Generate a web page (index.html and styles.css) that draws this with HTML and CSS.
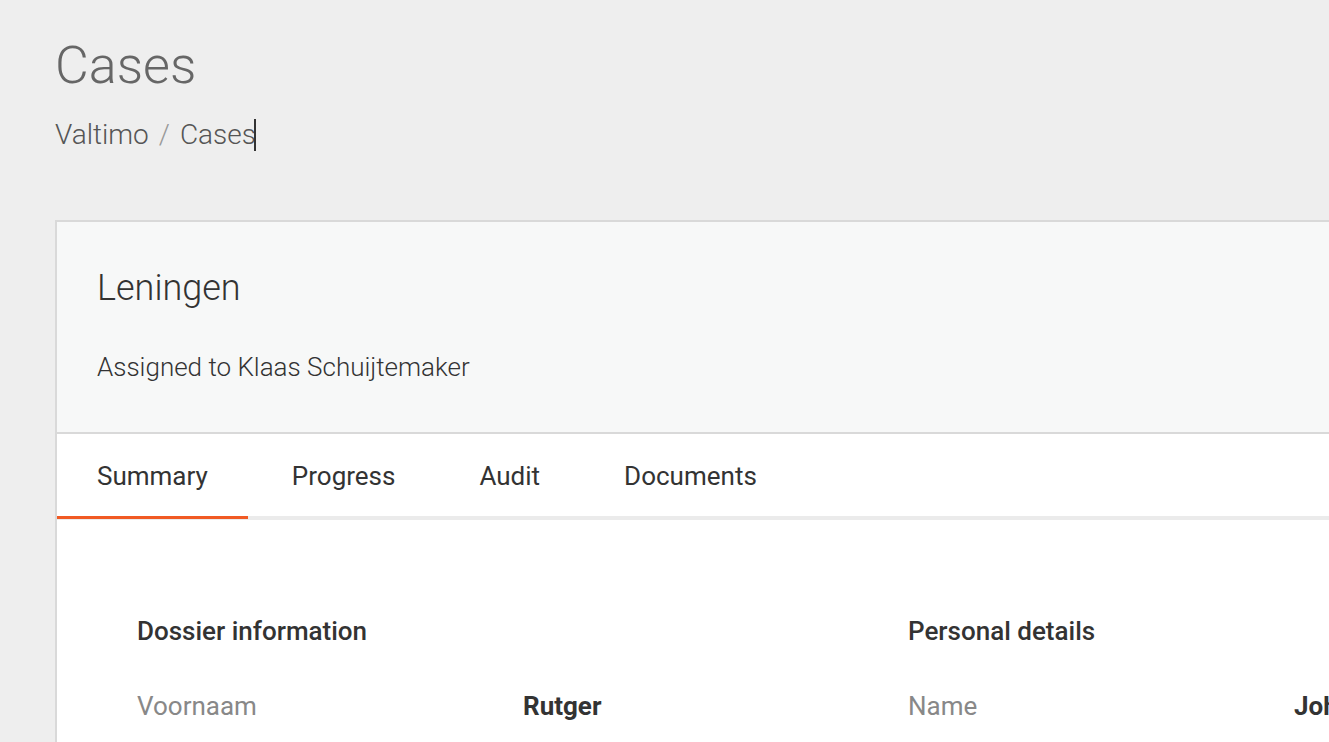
FILE: index.html
```html
<!DOCTYPE html>
<html>
<head>
<meta charset="utf-8">
<link rel="stylesheet" href="styles.css">
</head>
<body>
<div class="page">
  <div class="page-head">
    <h1 class="page-title">Cases</h1>
    <div class="crumbs"><span>Valtimo</span><span class="sep">/</span><span>Cases</span><span class="caret"></span></div>
  </div>
  <div class="card">
    <div class="card-head">
      <div class="case-title">Leningen</div>
      <div class="assignee">Assigned to Klaas Schuijtemaker</div>
    </div>
    <div class="tabs">
      <div class="tab active">Summary</div>
      <div class="tab">Progress</div>
      <div class="tab">Audit</div>
      <div class="tab">Documents</div>
    </div>
    <div class="card-body">
      <div class="section">
        <div class="section-title">Dossier information</div>
        <div class="row"><div class="label">Voornaam</div><div class="value">Rutger</div></div>
      </div>
      <div class="section">
        <div class="section-title">Personal details</div>
        <div class="row"><div class="label">Name</div><div class="value">John Doe</div></div>
      </div>
    </div>
  </div>
</div>
</body>
</html>
```

FILE: styles.css
```css
html, body {
  margin: 0;
  padding: 0;
  background: #eeeeee;
  font-family: Roboto, "Liberation Sans", sans-serif;
  overflow: hidden;
}
.page {
  padding: 28px 0 0 55px;
  width: 1600px;
}
.page-head {
  height: 192px;
}
.page-title {
  margin: 0;
  font-weight: 300;
  font-size: 52px;
  line-height: 76px;
  color: #666;
}
.crumbs {
  display: flex;
  align-items: center;
  font-weight: 300;
  font-size: 28px;
  line-height: 36px;
  color: #555;
  margin-top: 13px;
}
.crumbs .sep {
  color: #999;
  margin: 0 10px;
}
.caret {
  display: inline-block;
  width: 2px;
  height: 32px;
  background: #333;
  margin-left: -2px;
}
.card {
  border: 2px solid #d9d9d9;
  border-right: none;
  background: #fff;
}
.card-head {
  background: #f7f8f8;
  border-bottom: 2px solid #d9d9d9;
  padding: 45px 40px 0 40px;
  height: 165px;
}
.case-title {
  font-weight: 300;
  font-size: 36px;
  line-height: 42px;
  color: #333;
}
.assignee {
  margin-top: 41px;
  font-weight: 300;
  font-size: 26px;
  line-height: 34px;
  color: #333;
}
.tabs {
  display: flex;
  height: 82px;
  border-bottom: 4px solid #ebebeb;
}
.tab {
  padding: 0 40px;
  margin-right: 4px;
  font-size: 26px;
  line-height: 84px;
  color: #333;
  position: relative;
}
.tab.active::after {
  content: "";
  position: absolute;
  left: 0;
  right: 0;
  bottom: -3px;
  height: 3px;
  background: #f15a24;
}
.card-body {
  display: grid;
  grid-template-columns: 771px 771px;
  padding: 95px 0 0 80px;
  height: 300px;
}
.section-title {
  font-weight: 500;
  font-size: 26px;
  line-height: 32px;
  color: #333;
}
.row {
  display: grid;
  grid-template-columns: 386px 1fr;
  margin-top: 43px;
  font-size: 26px;
  line-height: 32px;
}
.label {
  color: #888;
}
.value {
  font-weight: 700;
  color: #333;
}
```
